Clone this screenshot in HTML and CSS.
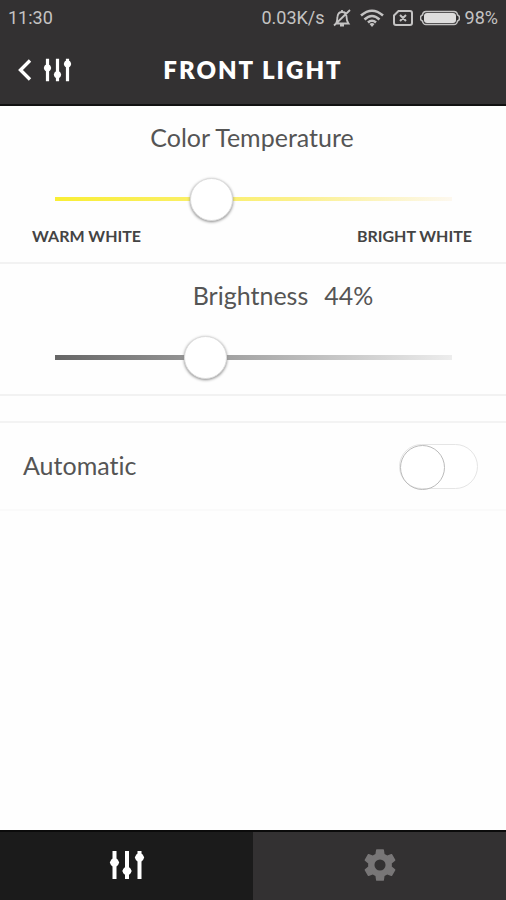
FILE: index.html
```html
<!DOCTYPE html>
<html lang="en">
<head>
<meta charset="utf-8">
<meta name="viewport" content="width=device-width, initial-scale=1">
<title>Front Light</title>
<link rel="stylesheet" href="styles.css">
</head>
<body>
<svg class="sprite" aria-hidden="true">
  <symbol id="mixer" viewBox="0 0 36 30">
    <path d="M5.500 1v28M18 1v28M30.500 1v28" stroke="currentColor" stroke-width="4"/>
    <path d="M5.500 7.500l4.800 5-4.800 5-4.800-5zM18 16l4.800 5-4.800 5-4.800-5zM30.500 2.500l4.800 5-4.800 5-4.800-5z" fill="currentColor"/>
    <circle cx="5.500" cy="12.500" r="4.300" fill="currentColor"/>
    <circle cx="18" cy="21" r="4.300" fill="currentColor"/>
    <circle cx="30.500" cy="7.500" r="4.300" fill="currentColor"/>
  </symbol>
</svg>
<div class="app">
  <div class="status">
    <span class="clock">11:30</span>
    <span class="speed">0.03K/s</span>
    <svg class="bell" viewBox="0 0 18 18" fill="none" stroke="currentColor" stroke-width="1.800">
      <path d="M3 14.500C4.500 12.500 4 10 4.500 7.500C5 4.500 6.500 3 9 3s4.500 1.500 4.500 4.500c0 3 .5 5 2 7zM9 3V1M7 16.500h4M1 16.500L17 1"/>
    </svg>
    <svg class="wifi" viewBox="0 0 24 18" fill="none" stroke="currentColor" stroke-width="2.600">
      <path d="M1 6.500Q12-3 23 6.500M4.500 10.500Q12 3.500 19.500 10.500M8 13.500Q12 10 16 13.500"/>
      <path d="M9.500 15Q12 13 14.500 15L12 18z" fill="currentColor" stroke="none"/>
    </svg>
    <svg class="sim" viewBox="0 0 20 16" fill="none" stroke="currentColor" stroke-width="2">
      <path d="M5.500 1H17q2 0 2 2v10q0 2-2 2H3q-2 0-2-2V5.500zM7 5l6 6M13 5l-6 6"/>
    </svg>
    <svg class="battery" viewBox="0 0 40 16">
      <path d="M6 1.500h28q3 0 3.500 3.500q2 .5 2 3t-2 3q-.5 3.500-3.500 3.500H6q-3 0-3.500-3.500q-2-.5-2-3t2-3Q3 1.500 6 1.500z" fill="none" stroke="currentColor" stroke-width="1.500"/>
      <rect x="4" y="3" width="32" height="10" rx="3" fill="#dedddd"/>
    </svg>
    <span class="percent">98%</span>
  </div>
  <header class="header">
    <button class="back" aria-label="Back">
      <svg class="chevron" viewBox="0 0 14 22"><path d="M12 1.500L2.500 11L12 20.500" fill="none" stroke="currentColor" stroke-width="3.400"/></svg>
      <svg class="mixer-small"><use href="#mixer"/></svg>
    </button>
    <h1>FRONT LIGHT</h1>
  </header>
  <main>
    <section class="panel temperature">
      <label for="temperature">Color Temperature</label>
      <input type="range" id="temperature" min="0" max="100" value="38">
      <div class="ends"><span>WARM WHITE</span><span>BRIGHT WHITE</span></div>
    </section>
    <section class="panel brightness">
      <div class="caption"><label for="brightness">Brightness</label><output for="brightness">44%</output></div>
      <input type="range" id="brightness" min="12" max="100" value="44">
    </section>
    <section class="automatic">
      <label for="automatic">Automatic</label>
      <input type="checkbox" role="switch" id="automatic">
    </section>
  </main>
  <nav class="tabs">
    <button class="tab active" aria-label="Light controls"><svg class="mixer-large"><use href="#mixer"/></svg></button>
    <button class="tab" aria-label="Settings">
      <svg class="gear" viewBox="0 0 24 24"><path fill="currentColor" fill-rule="evenodd" d="M19.430 12.980c.04-.32.07-.64.07-.98s-.03-.66-.07-.98l2.110-1.650c.19-.15.24-.42.12-.64l-2-3.460c-.12-.22-.39-.3-.61-.22l-2.490 1c-.52-.4-1.080-.73-1.690-.98l-.38-2.650C14.460 2.180 14.250 2 14 2h-4c-.25 0-.46.18-.49.42l-.38 2.650c-.61.25-1.170.59-1.690.98l-2.490-1c-.23-.09-.49 0-.61.22l-2 3.460c-.13.22-.07.49.12.64l2.110 1.650c-.04.32-.07.65-.07.98s.03.66.07.98l-2.110 1.650c-.19.15-.24.42-.12.64l2 3.460c.12.22.39.3.61.22l2.490-1c.52.4 1.080.73 1.690.98l.38 2.650c.03.24.24.42.49.42h4c.25 0 .46-.18.49-.42l.38-2.650c.61-.25 1.170-.59 1.690-.98l2.490 1c.23.09.49 0 .61-.22l2-3.460c.12-.22.07-.49-.12-.64zM12 15.500a3.500 3.500 0 1 1 0-7a3.500 3.500 0 0 1 0 7z"/></svg>
    </button>
  </nav>
</div>
</body>
</html>
```

FILE: styles.css
```css
* { box-sizing: border-box; }
body { margin: 0; background: #fefefe; color: #555; font-family: Lato, sans-serif; font-variant-ligatures: none; }
button { border: 0; padding: 0; background: none; color: inherit; cursor: pointer; }
svg { display: block; }
.sprite { display: none; }
.app { display: flex; flex-direction: column; min-height: 100vh; }

.status { display: flex; align-items: center; height: 36px; padding: 0 8px; background: #333132; color: #c4c3c3; font: 18px/24px Roboto, sans-serif; }
.clock { margin-right: auto; }
.bell { width: 18px; height: 18px; margin-left: 8px; }
.wifi { width: 24px; height: 18px; margin-left: 9px; }
.sim { width: 20px; height: 16px; margin-left: 9px; }
.battery { width: 40px; height: 16px; margin: 0 5px 0 7px; }

.header { display: grid; grid-template-columns: 1fr auto 1fr; align-items: center; height: 70px; padding: 0 18px; background: #333132; border-bottom: 2px solid #111; color: #fff; }
.back { display: flex; align-items: center; gap: 11px; justify-self: start; }
.chevron { width: 14px; height: 22px; }
.mixer-small { width: 29px; height: 24px; }
h1 { margin: 0; font-size: 24px; line-height: 32px; font-weight: 800; letter-spacing: 2px; }

main { flex: 1; }
.panel { display: flex; flex-direction: column; align-items: stretch; padding: 15px 34px 0 32px; border-bottom: 2px solid #f2f2f2; font-size: 25px; line-height: 32px; text-align: center; }
.temperature { padding-bottom: 16px; }
.brightness { padding-bottom: 15px; }
.caption { display: flex; justify-content: center; gap: 16px; padding-left: 62px; }
.ends { display: flex; justify-content: space-between; margin-top: 5px; color: #444; font-size: 16px; line-height: 20px; font-weight: 700; }

input { margin: 0; appearance: none; }
input[type="range"] { height: 44px; margin: 24px 20px 0 23px; background: linear-gradient(90deg, #f9ee35, #fbf08a 60%, #fdf8ef) center / 100% 4px no-repeat; }
#brightness { border-radius: 3px; background-image: linear-gradient(90deg, #666, #aaa 50%, #ededed); background-size: 100% 5px; }
input[type="range"]::-webkit-slider-thumb { appearance: none; width: 43px; height: 43px; border: 1px solid #ddd; border-radius: 50%; background: #fff; box-shadow: 0 1px 3px #888; }

.automatic { display: flex; align-items: center; justify-content: space-between; margin-top: 25px; padding: 21px 28px 20px 23px; border-top: 2px solid #f3f3f3; border-bottom: 2px solid #fafafa; font-size: 25px; line-height: 32px; }
.automatic label { padding-bottom: 4px; }
input[type="checkbox"] { width: 79px; height: 45px; border: 1px solid #e5e5e5; border-radius: 23px; background: #fff; }
input[type="checkbox"]::before { content: ""; display: block; width: 43px; height: 43px; border: 1px solid #bbb; border-radius: 50%; }
input[type="checkbox"]:checked::before { margin-left: auto; }

.tabs { display: flex; height: 70px; border-top: 2px solid #0b0b0b; background: #333132; }
.tab { display: flex; flex: 1; align-items: center; justify-content: center; padding-bottom: 2px; color: #787677; }
.active { background: #1b1b1b; color: #fff; }
.mixer-large { width: 36px; height: 30px; }
.gear { width: 38px; height: 38px; }
```
